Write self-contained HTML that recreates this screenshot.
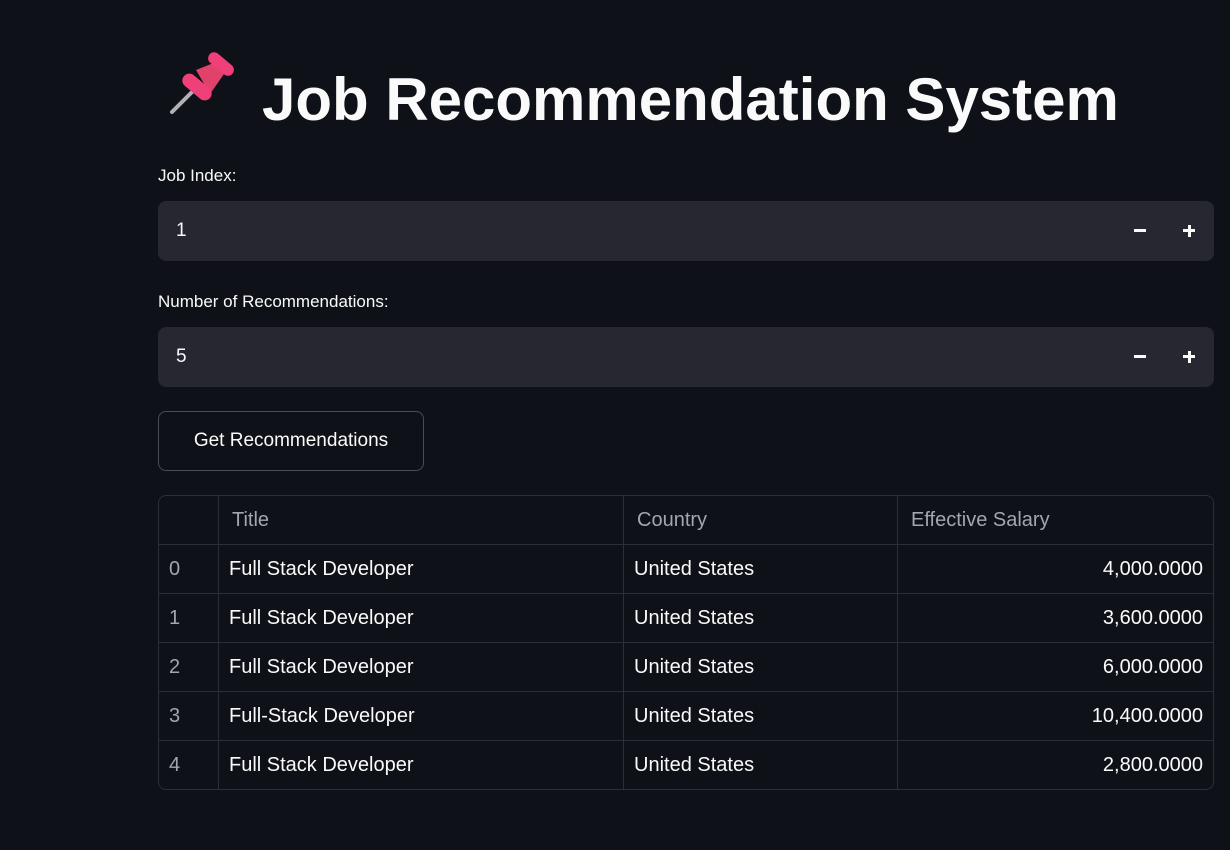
<!DOCTYPE html>
<html><head><meta charset="utf-8"><style>
body{margin:0;background:#0e1117;color:#fafafa;font-family:"Liberation Sans",sans-serif;width:1230px;height:850px;overflow:hidden;position:relative}
.t{position:absolute;left:166px;top:50px;font-size:60px;font-weight:bold;white-space:nowrap;line-height:76px}
.t span{display:inline-block;width:96px}
.lbl{position:absolute;left:158px;font-size:17px;color:#fafafa}
.inp{position:absolute;left:158px;width:1056px;height:60px;background:#262730;border-radius:8px;font-size:19px}
.inp .v{position:absolute;left:18px;top:19px}
.inp .m{position:absolute;left:976px;top:28px;width:12px;height:3px;background:#fafafa}
.inp .p1{position:absolute;left:1025px;top:28px;width:12px;height:3px;background:#fafafa}
.inp .p2{position:absolute;left:1029.5px;top:23.5px;width:3px;height:12px;background:#fafafa}
.btn{position:absolute;left:158px;top:411px;width:264px;height:58px;border:1px solid #4a4c55;border-radius:8px;font-size:19px;line-height:58px;text-align:center}
table{position:absolute;left:158px;top:495px;width:1056px;table-layout:fixed;border-collapse:separate;border-spacing:0;border:1px solid #2b2e36;border-radius:8px;font-size:20px}
td{height:48px;border-right:1px solid #2b2e36;border-bottom:1px solid #2b2e36;padding:0 10px;white-space:nowrap;overflow:hidden}
tr:last-child td{border-bottom:none}
td:last-child{border-right:none;text-align:right}
tr.h td{color:#a3a6ad;padding-left:13px}
tr.h td:last-child{text-align:left}
td.i{color:#a3a6ad}
</style></head><body>
<div class="t"><span><svg width="70" height="70" viewBox="0 0 70 70"><line x1="6" y1="62" x2="28" y2="40" stroke="#b5b0b8" stroke-width="4" stroke-linecap="round"/><path d="M30 20 L50 12 L58 24 L44 44 Z" fill="#e0426a"/><rect x="40" y="8" width="30" height="12" rx="6" transform="rotate(40 55 14)" fill="#f0407a"/><rect x="14" y="30" width="34" height="14" rx="7" transform="rotate(40 31 37)" fill="#f0407a"/></svg></span>Job Recommendation System</div>
<div class="lbl" style="top:166px">Job Index:</div>
<div class="inp" style="top:201px"><div class="v">1</div><div class="m"></div><div class="p1"></div><div class="p2"></div></div>
<div class="lbl" style="top:292px">Number of Recommendations:</div>
<div class="inp" style="top:327px"><div class="v">5</div><div class="m"></div><div class="p1"></div><div class="p2"></div></div>
<div class="btn">Get Recommendations</div>
<table>
<colgroup><col style="width:60px"><col style="width:405px"><col style="width:274px"><col></colgroup>
<tr class="h"><td class="i"></td><td>Title</td><td>Country</td><td>Effective Salary</td></tr>
<tr><td class="i">0</td><td>Full Stack Developer</td><td>United States</td><td>4,000.0000</td></tr>
<tr><td class="i">1</td><td>Full Stack Developer</td><td>United States</td><td>3,600.0000</td></tr>
<tr><td class="i">2</td><td>Full Stack Developer</td><td>United States</td><td>6,000.0000</td></tr>
<tr><td class="i">3</td><td>Full-Stack Developer</td><td>United States</td><td>10,400.0000</td></tr>
<tr><td class="i">4</td><td>Full Stack Developer</td><td>United States</td><td>2,800.0000</td></tr>
</table>
</body></html>
